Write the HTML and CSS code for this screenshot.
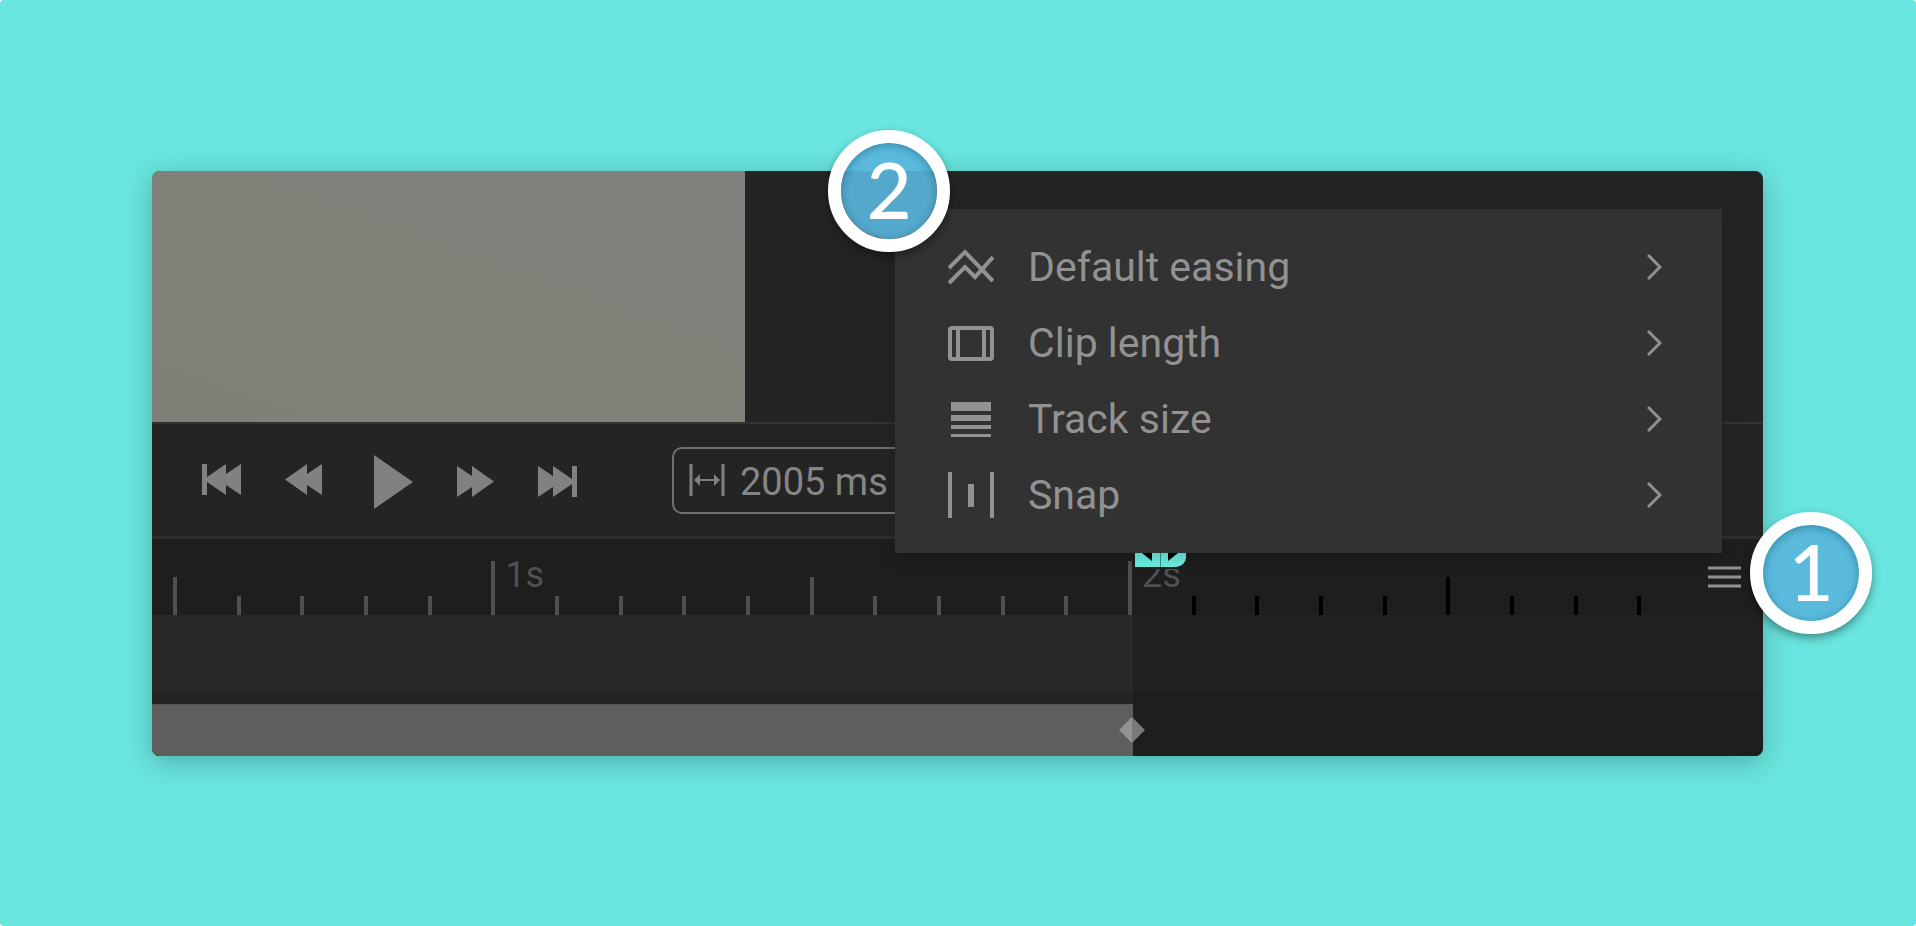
FILE: index.html
```
<!DOCTYPE html>
<html lang="en">
<head>
  <meta charset="UTF-8">
  <meta name="viewport" content="width=device-width, initial-scale=1.0">
  <title>Timeline settings</title>
  <link rel="stylesheet" href="styles.css">
</head>
<body>

<main class="page">
  <div class="editor">
    <div class="stage">
      <div class="preview"></div>
    </div>

    <div class="controls">
      <button type="button" class="control" aria-label="Go to start">
        <svg width="39" height="60" viewBox="0 0 39 60"><path d="M0 14h5v13L24 14v10L39 14v31L24 35v10L5 32v13H0z"/></svg>
      </button>
      <button type="button" class="control" aria-label="Rewind">
        <svg width="37" height="60" viewBox="0 0 37 60"><path d="M0 29.500L22 14v10L37 14v31L22 35v10z"/></svg>
      </button>
      <button type="button" class="control play" aria-label="Play">
        <svg width="39" height="60" viewBox="0 0 39 60"><path d="M0 5l39 27L0 59z"/></svg>
      </button>
      <button type="button" class="control" aria-label="Forward">
        <svg width="37" height="60" viewBox="0 0 37 60"><path d="M37 31.500L15 47V37L0 47V16l15 10V16z"/></svg>
      </button>
      <button type="button" class="control" aria-label="Go to end">
        <svg width="39" height="60" viewBox="0 0 39 60"><path d="M39 47h-5V34L15 47V37L0 47V16l15 10V16l19 13V16h5z"/></svg>
      </button>
      <label class="length">
        <svg width="36" height="32" viewBox="0 0 36 32" aria-hidden="true">
          <path d="M2 0v32M34 0v32" stroke-width="3"/>
          <path d="M8 16h20" stroke-width="2"/>
          <path class="solid" d="M5 16l6-6v12zM31 16l-6-6v12z"/>
        </svg>
        <input type="text" value="2005 ms" aria-label="Length">
      </label>
    </div>

    <div class="ruler">
      <div class="ticks">
        <span class="tick half"></span>
        <span class="tick"></span>
        <span class="tick"></span>
        <span class="tick"></span>
        <span class="tick"></span>
        <span class="tick second"><b>1s</b></span>
        <span class="tick"></span>
        <span class="tick"></span>
        <span class="tick"></span>
        <span class="tick"></span>
        <span class="tick half"></span>
        <span class="tick"></span>
        <span class="tick"></span>
        <span class="tick"></span>
        <span class="tick"></span>
        <span class="tick second"><b>2s</b></span>
        <span class="tick after"></span>
        <span class="tick after"></span>
        <span class="tick after"></span>
        <span class="tick after"></span>
        <span class="tick half after"></span>
        <span class="tick after"></span>
        <span class="tick after"></span>
        <span class="tick after"></span>
      </div>
      <button type="button" class="settings" aria-label="Timeline settings">
        <svg width="33" height="22" viewBox="0 0 33 22"><path d="M0 2h33M0 11h33M0 20h33" stroke-width="3"/></svg>
      </button>
      <div class="playhead">
        <svg width="51" height="28" viewBox="0 0 51 28"><path d="M17 6v16l-10-8zM33 6v16l10-8z"/><path class="split" d="M25.500 0v28"/></svg>
      </div>
      <div class="badge badge-one">1</div>
    </div>

    <div class="tracks">
      <div class="track"><div class="played"></div></div>
      <div class="clip-track">
        <div class="clip-area">
          <div class="clip"></div>
          <svg class="keyframe" width="26" height="26" viewBox="0 0 26 26"><path d="M13 0v26L0 13z" fill="#929292"/><path d="M13 0v26l13-13z" fill="#797979"/></svg>
        </div>
      </div>
    </div>

    <div class="menu">
      <ul>
        <li><button type="button">
          <svg width="46" height="46" viewBox="0 0 46 46"><path d="M1 24L17 8l28 29M1 39l16-16 10 10L45 13" stroke-width="4"/></svg>
          <span>Default easing</span>
          <svg class="arrow" width="15" height="28" viewBox="0 0 15 28"><path d="M1 2l12 12L1 26" stroke-width="3"/></svg>
        </button></li>
        <li><button type="button">
          <svg width="46" height="46" viewBox="0 0 46 46"><rect x="2" y="8" width="42" height="31" rx="2" stroke-width="4"/><path d="M10 8v31M36 8v31" stroke-width="4"/></svg>
          <span>Clip length</span>
          <svg class="arrow" width="15" height="28" viewBox="0 0 15 28"><path d="M1 2l12 12L1 26" stroke-width="3"/></svg>
        </button></li>
        <li><button type="button">
          <svg width="46" height="46" viewBox="0 0 46 46"><path class="solid" d="M3 6h40v9H3zM3 19h40v6H3zM3 29h40v4H3zM3 38h40v3H3z"/></svg>
          <span>Track size</span>
          <svg class="arrow" width="15" height="28" viewBox="0 0 15 28"><path d="M1 2l12 12L1 26" stroke-width="3"/></svg>
        </button></li>
        <li><button type="button">
          <svg width="46" height="46" viewBox="0 0 46 46"><path class="solid" d="M0 0h4v46H0zM42 0h4v46h-4zM20 12h6v23h-6z"/></svg>
          <span>Snap</span>
          <svg class="arrow" width="15" height="28" viewBox="0 0 15 28"><path d="M1 2l12 12L1 26" stroke-width="3"/></svg>
        </button></li>
      </ul>
      <div class="badge badge-two">2</div>
    </div>
  </div>
</main>

</body>
</html>
```
FILE: styles.css
```
* {
  box-sizing: border-box;
}
body {
  margin: 0;
  background: #fff;
  font-family: Roboto, sans-serif;
}
button {
  border: none;
  padding: 0;
  background: transparent;
  color: inherit;
  font: inherit;
  cursor: pointer;
}
svg {
  display: block;
  flex: none;
}
.page {
  min-height: 100vh;
  padding: 171px 153px 170px 152px;
  border-radius: 4px;
  background: #69e6df;
}
.editor {
  position: relative;
  border-radius: 8px;
  background: #242424;
  box-shadow: 0 6px 28px rgba(0, 0, 0, 0.25);
}

.stage {
  height: 251px;
  border-radius: 8px 8px 0 0;
}
.preview {
  width: 593px;
  height: 100%;
  border-radius: 8px 0 0 0;
  background: linear-gradient(20deg, #7f7f78, #7f8179 50%, #80817d);
}

/* transport bar */
.controls {
  display: flex;
  align-items: center;
  gap: 44px;
  height: 117px;
  padding-left: 50px;
  border-top: 2px solid #333;
  border-bottom: 3px solid #2f2f2f;
}
.control {
  fill: #818181;
}
.play {
  margin-left: 8px;
}
.length {
  display: flex;
  align-items: center;
  gap: 15px;
  width: 320px;
  height: 67px;
  margin-left: 51px;
  padding-left: 15px;
  border: 2px solid #707070;
  border-radius: 10px;
}
.length svg {
  stroke: #808080;
}
.length .solid {
  fill: #808080;
  stroke: none;
}
.length input {
  width: 200px;
  border: none;
  padding: 4px 0 0;
  background: transparent;
  color: #868686;
  font-family: inherit;
  font-size: 38px;
}

/* ruler */
.ruler {
  position: relative;
  display: flex;
  height: 76px;
  padding-left: 21px;
  background: #1e1e1e;
}
.ticks {
  display: flex;
  flex: 1;
  align-items: flex-end;
}
.tick {
  flex: 1 1 0;
  width: 0;
  height: 19px;
  border-left: 4px solid #505050;
}
.half {
  height: 38px;
}
.second {
  height: 54px;
}
.after {
  border-color: #000;
}
.tick b {
  display: block;
  padding-left: 10px;
  color: #505050;
  font-size: 36px;
  font-weight: 400;
  line-height: 28px;
}
.settings {
  width: 62px;
  padding-left: 7px;
}
.settings svg {
  stroke: #929292;
}
.playhead {
  position: absolute;
  top: 0;
  left: 61%;
  overflow: hidden;
  border-radius: 0 0 10px 0;
  background: #6ceee2;
  box-shadow: 0 0 0 2px #1e1e1e;
}
.playhead .split {
  stroke: #3d8f88;
}

/* tracks */
.track {
  height: 76px;
  background: #212121;
}
.played {
  width: 60.9%;
  height: 100%;
  background: #292929;
}
.clip-track {
  height: 65px;
  border-radius: 0 0 8px 8px;
  background: #1e1e1e;
}
.clip-area {
  position: relative;
  width: 60.9%;
  height: 100%;
  padding-top: 13px;
  border-radius: 0 0 0 8px;
  background: #242424;
}
.clip {
  height: 100%;
  border-top: 1px solid #555;
  border-radius: 0 0 0 8px;
  background: #5e5e5e;
}
.keyframe {
  position: absolute;
  right: -12px;
  bottom: 13px;
}

/* settings menu */
.menu {
  position: absolute;
  top: 38px;
  right: 41px;
  width: 827px;
  padding: 20px 0;
  background: #323232;
  box-shadow: 0 4px 16px rgba(0, 0, 0, 0.2);
}
.menu ul {
  margin: 0;
  padding: 0;
  list-style: none;
}
.menu button {
  display: flex;
  align-items: center;
  gap: 34px;
  width: 100%;
  height: 76px;
  padding: 0 60px 0 53px;
  color: #929292;
  font-size: 41px;
}
.menu svg,
.settings svg {
  fill: none;
}
.menu svg {
  stroke: #929292;
}
.menu .solid {
  fill: #929292;
  stroke: none;
}
.menu .arrow {
  margin-left: auto;
}

/* numbered markers */
.badge {
  position: absolute;
  display: flex;
  align-items: center;
  justify-content: center;
  width: 122px;
  height: 122px;
  padding-bottom: 4px;
  border: 13px solid #fff;
  border-radius: 50%;
  background: rgba(89, 181, 220, 0.91) padding-box;
  box-shadow: 0 4px 10px rgba(0, 0, 0, 0.4), inset 0 2px 8px rgba(0, 60, 90, 0.4);
  color: #fff;
  font-family: Lato, sans-serif;
  font-size: 78px;
  font-weight: 500;
  line-height: 92px;
}
.badge-one {
  top: -27px;
  right: -109px;
}
.badge-two {
  top: -79px;
  left: -67px;
}
```
